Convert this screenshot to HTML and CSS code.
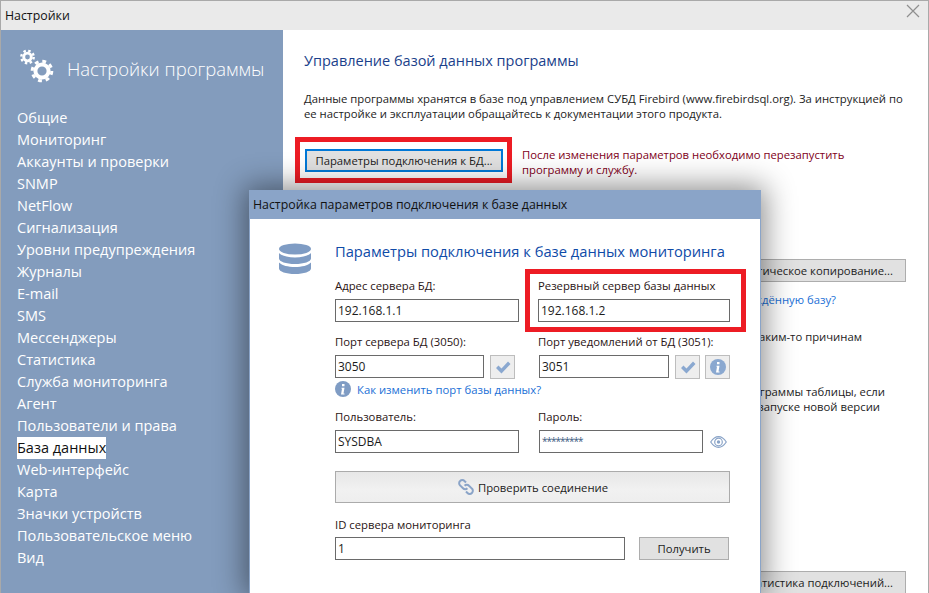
FILE: index.html
```html
<!DOCTYPE html>
<html lang="ru">
<head>
<meta charset="utf-8">
<title>Настройки</title>
<link rel="stylesheet" href="styles.css">
</head>
<body>
<div class="window">
  <header class="titlebar">
    <span>Настройки</span>
    <svg class="close" width="14" height="14" viewBox="0 0 14 14"><path d="M1 1l12 12M13 1L1 13" stroke="#8f8f8f" stroke-width="1.2" fill="none"/></svg>
  </header>
  <div class="body">
    <aside class="sidebar">
      <div class="side-head">
        <svg class="gears" width="36" height="36" viewBox="0 0 36 36">
          <circle cx="7.500" cy="8" r="3.800" fill="none" stroke="#fff" stroke-width="2.800"/>
          <circle cx="7.500" cy="8" r="6.200" fill="none" stroke="#fff" stroke-width="2.400" stroke-dasharray="2.430 2.440"/>
          <circle cx="22" cy="22" r="6.600" fill="none" stroke="#fff" stroke-width="4"/>
          <circle cx="22" cy="22" r="9.800" fill="none" stroke="#fff" stroke-width="3" stroke-dasharray="3.850 3.850"/>
        </svg>
        <span>Настройки программы</span>
      </div>
      <nav class="menu">
        <a>Общие</a><a>Мониторинг</a><a>Аккаунты и проверки</a><a>SNMP</a><a>NetFlow</a><a>Сигнализация</a><a>Уровни предупреждения</a><a>Журналы</a><a>E-mail</a><a>SMS</a><a>Мессенджеры</a><a>Статистика</a><a>Служба мониторинга</a><a>Агент</a><a>Пользователи и права</a><a class="active">База данных</a><a>Web-интерфейс</a><a>Карта</a><a>Значки устройств</a><a>Пользовательское меню</a><a>Вид</a>
      </nav>
    </aside>
    <main class="content">
      <h1>Управление базой данных программы</h1>
      <p class="intro">Данные программы хранятся в базе под управлением СУБД Firebird (www.firebirdsql.org). За инструкцией по<br>ее настройке и эксплуатации обращайтесь к документации этого продукта.</p>
      <div class="conn-row">
        <div class="red-box"><button class="btn focus">Параметры подключения к БД...</button></div>
        <p class="warn">После изменения параметров необходимо перезапустить<br>программу и службу.</p>
      </div>
      <div class="under">
        <button class="btn wide">Автоматическое копирование...</button>
        <a class="link restore">Как восстановить повреждённую базу?</a>
        <p class="note one">Если по каким-то причинам</p>
        <p class="note two"><span class="l1">Создать в базе программы таблицы, если</span><span class="l2">они не созданы при запуске новой версии</span></p>
        <button class="btn wide stats">Статистика подключений...</button>
      </div>
    </main>
  </div>
</div>

<section class="dialog">
  <header class="dlg-title">Настройка параметров подключения к базе данных</header>
  <div class="dlg-body">
    <svg class="db" width="34" height="34" viewBox="0 0 34 34" fill="#7f9cc4">
      <ellipse cx="17" cy="6" rx="16" ry="5.500"/>
      <path d="M1 10c3 3 9 4.500 16 4.500S30 13 33 10v5.500c0 3-7 5.500-16 5.500S1 18.500 1 15.500z"/>
      <path d="M1 19.500c3 3 9 4.500 16 4.500s13-1.500 16-4.500v6c0 3-7 5.500-16 5.500S1 28.500 1 25.500z"/>
    </svg>
    <div class="form">
      <h2>Параметры подключения к базе данных мониторинга</h2>
      <div class="grid">
        <div class="field">
          <label>Адрес сервера БД:</label>
          <div class="input">192.168.1.1</div>
        </div>
        <div class="field marked">
          <label>Резервный сервер базы данных</label>
          <div class="input">192.168.1.2</div>
        </div>
        <div class="field port">
          <label>Порт сервера БД (3050):</label>
          <div class="with-btn narrow">
            <div class="input grow">3050</div>
            <span class="sq"><svg width="20" height="20" viewBox="0 0 20 20"><path d="M3 11l2.500-2.500 3 3L15 4.500l2.500 2.500-9 9.500z" fill="#8aa8d0"/></svg></span>
          </div>
          <div class="help">
            <svg width="16" height="16" viewBox="0 0 16 16"><circle cx="8" cy="8" r="8" fill="#7f9cc4"/><path d="M7 3h2.500v2.200H7zM6.500 6.800h3l-1 5.700h1v1H6l1-5.700h-.5z" fill="#fff"/></svg>
            <a class="link">Как изменить порт базы данных?</a>
          </div>
        </div>
        <div class="field port">
          <label>Порт уведомлений от БД (3051):</label>
          <div class="with-btn shift">
            <div class="input grow">3051</div>
            <span class="sq"><svg width="20" height="20" viewBox="0 0 20 20"><path d="M3 11l2.500-2.500 3 3L15 4.500l2.500 2.500-9 9.500z" fill="#8aa8d0"/></svg></span>
            <span class="sq"><svg width="16" height="16" viewBox="0 0 16 16"><circle cx="8" cy="8" r="8" fill="#8aa8d0"/><path d="M7 3h2.500v2.200H7zM6.500 6.800h3l-1 5.700h1v1H6l1-5.700h-.5z" fill="#fff"/></svg></span>
          </div>
        </div>
        <div class="field user">
          <label>Пользователь:</label>
          <div class="input">SYSDBA</div>
        </div>
        <div class="field user">
          <label>Пароль:</label>
          <div class="with-btn shift">
            <div class="input grow secret">*********</div>
            <svg class="eye" width="17" height="14" viewBox="0 0 17 14"><path d="M.7 7C3 3.500 5.500 1.700 8.500 1.700S14 3.500 16.300 7c-2.300 3.500-4.800 5.300-7.800 5.300S3 10.500.7 7z" fill="none" stroke="#8aa4c8" stroke-width="1.200"/><circle cx="8.500" cy="7" r="3.800" fill="none" stroke="#8aa4c8" stroke-width="1.200"/><circle cx="8.500" cy="7" r="1.700" fill="#8aa4c8"/></svg>
          </div>
        </div>
      </div>
      <button class="check">
        <svg width="18" height="18" viewBox="0 0 18 18" fill="none" stroke="#8aa4c8" stroke-width="2"><path d="M9 4.500 7.500 3a3 3 0 0 0-4.400 0 3 3 0 0 0 0 4.400L6 10.300a3 3 0 0 0 4.400 0"/><path d="M9 13.500l1.500 1.500a3 3 0 0 0 4.400 0 3 3 0 0 0 0-4.400L12 7.700a3 3 0 0 0-4.400 0"/></svg>
        Проверить соединение
      </button>
      <label class="id-label">ID сервера мониторинга</label>
      <div class="id-row">
        <div class="input grow">1</div>
        <button class="btn get">Получить</button>
      </div>
    </div>
  </div>
</section>
</body>
</html>
```

FILE: styles.css
```css
* { box-sizing: border-box; }
html, body { margin: 0; padding: 0; height: 100%; overflow: hidden; }
body {
  width: 929px; height: 593px; position: relative; background: #fff;
  font-family: "Open Sans", "Noto Sans", sans-serif; font-size: 11.300px; color: #1c1c1c;
}
p, h1, h2 { margin: 0; font-weight: 400; }
.window { height: 593px; border: 1px solid #a9a9a9; border-bottom: 0; display: flex; flex-direction: column; }
.titlebar { flex: 0 0 29px; background: #eaeaea; display: flex; align-items: center; justify-content: space-between; padding: 0 8px 0 4px; font-size: 12.350px; color: #111; }
.close { align-self: flex-start; margin-top: 3px; }
.body { flex: 1; display: flex; min-height: 0; }
.sidebar { flex: 0 0 282px; background: #839cbd; color: #fff; padding: 17px 0 0 16px; }
.side-head { display: flex; align-items: flex-start; font-size: 18.500px; font-weight: 300; height: 60px; }
.side-head span { margin: 9px 0 0 11px; line-height: 26px; }
.gears { margin: 2px 0 0 3px; }
.menu { display: flex; flex-direction: column; align-items: flex-start; font-size: 14.500px; }
.menu a { height: 22px; line-height: 22px; }
.menu .active { background: #fff; color: #111; }
.content { flex: 1; padding: 21px 0 0 21px; min-width: 0; }
h1 { font-size: 14.500px; color: #1b3f8b; line-height: 20px; }
.intro { margin-top: 20px; line-height: 15px; white-space: nowrap; }
.conn-row { display: flex; margin-top: 16px; margin-left: -9px; }
.red-box { border: 5px solid #ed1c24; padding: 7px 4px 6px 5px; height: 46px; width: 217px; }
.btn { font: inherit; color: #1c1c1c; background: #e1e1e1; border: 1px solid #adadad; padding: 0; }
.btn.focus { display: block; width: 198px; height: 23px; border: 2px solid #0078d7; }
.warn { color: #800020; margin: 10px 0 0 10px; line-height: 15px; white-space: nowrap; }
.under { display: flex; flex-direction: column; align-items: flex-end; width: 602px; }
.wide { width: 220px; height: 23px; text-align: right; padding-right: 12px; }
.btn.wide { margin-top: 76px; white-space: nowrap; }
.link { color: #1a6fd6; }
.restore { margin-top: 10px; line-height: 16px; padding-right: 70px; white-space: nowrap; }
.note { line-height: 16px; white-space: nowrap; text-align: right; }
.note.one { margin-top: 21px; padding-right: 44px; }
.note.two { margin-top: 39px; line-height: 15px; }
.l1, .l2 { display: block; }
.l1 { padding-right: 21px; }
.l2 { padding-right: 26px; }
.btn.stats { margin-top: 157px; }

.dialog {
  position: absolute; left: 249px; top: 190px; width: 512px; height: 403px;
  background: #fff; border: 1px solid #8aa4c8; border-bottom: 0;
  box-shadow: 0 0 28px 4px rgba(0,0,0,.45);
}
.dlg-title { height: 28px; background: #8aa4c8; line-height: 28px; padding-left: 3px; font-size: 12.350px; color: #111; }
.dlg-body { display: flex; padding: 22px 0 0 28px; }
.db { margin-top: 2px; }
.form { width: 395px; margin-left: 23px; }
h2 { font-size: 14.700px; color: #0f4ba8; line-height: 20px; white-space: nowrap; }
.grid { display: grid; grid-template-columns: 184px 192px; column-gap: 19px; margin-top: 17px; }
label { display: block; line-height: 16px; white-space: nowrap; color: #2a1414; }
.input { height: 23px; border: 1px solid #6a6a6a; background: #fff; line-height: 21px; padding-left: 2px; font-size: 12px; }
.field label + * { margin-top: 5px; }
.field.marked { position: relative; }
.field.marked::before { content: ""; position: absolute; left: -13px; right: -16px; top: -9px; bottom: -10px; border: 5px solid #ed1c24; pointer-events: none; }
.with-btn { display: flex; gap: 6px; align-items: flex-start; }
.narrow { margin-right: 4px; }
.shift { margin-left: 1px; }
.grow { flex: 1; min-width: 0; }
.port { margin-top: 12px; }
.user { margin-top: 12px; }
.sq { flex: 0 0 25px; height: 24px; border: 1px solid #bdbdbd; background: #eeeeee; display: flex; align-items: center; justify-content: center; }
.sq + .sq { margin-left: -1px; }
.help { display: flex; align-items: center; gap: 6px; height: 16px; margin-top: 2px; white-space: nowrap; }
.help svg { flex: none; }
.secret { font-size: 10px; letter-spacing: -1px; color: #3a5a80; }
.eye { margin: 5px 3px 0 1px; flex: 0 0 17px; }
.check { display: flex; align-items: center; justify-content: center; gap: 3px; width: 100%; height: 32px; margin-top: 18px; font: inherit; color: #1c1c1c; background: linear-gradient(#e7e7e7, #f1f1f1 60%, #eeeeee); border: 1px solid #ababab; }
.id-label { margin-top: 14px; }
.id-row { display: flex; width: 394px; margin-top: 4px; gap: 14px; align-items: flex-start; }
.btn.get { flex: 0 0 90px; height: 23px; }
```
